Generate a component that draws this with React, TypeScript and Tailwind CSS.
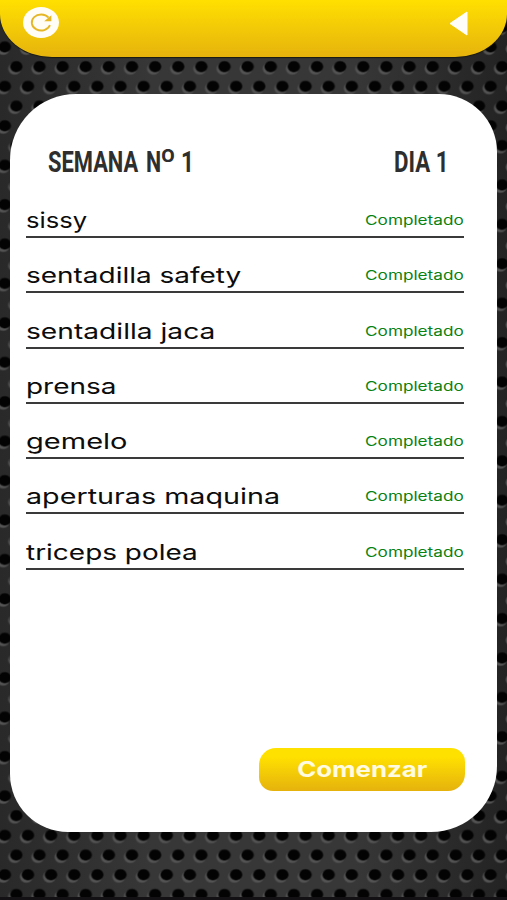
const exercises = [
  { name: "sissy", fit: "scale-x-[1.19]" },
  { name: "sentadilla safety", fit: "scale-x-[1.3]" },
  { name: "sentadilla jaca", fit: "scale-x-[1.31]" },
  { name: "prensa", fit: "scale-x-[1.3]" },
  { name: "gemelo", fit: "scale-x-[1.35]" },
  { name: "aperturas maquina", fit: "scale-x-[1.335]" },
  { name: "triceps polea", fit: "scale-x-[1.3]" },
];

// Perforated metal plate behind the whole screen
const MetalBackground = () => (
  <svg className="absolute inset-0 w-full h-full" aria-hidden="true">
    <defs>
      <linearGradient id="plate" x1="0" x2="1" y1="0" y2="0">
        <stop offset="0" stopColor="#292929" />
        <stop offset="0.3" stopColor="#373737" />
        <stop offset="0.7" stopColor="#373737" />
        <stop offset="1" stopColor="#232323" />
      </linearGradient>
      <radialGradient id="rim">
        <stop offset="0.75" stopColor="#545454" />
        <stop offset="1" stopColor="#545454" stopOpacity="0" />
      </radialGradient>
      <radialGradient id="hole">
        <stop offset="0.75" stopColor="#030303" />
        <stop offset="1" stopColor="#030303" stopOpacity="0" />
      </radialGradient>
      <pattern id="holes" width="23.13" height="39.42" patternUnits="userSpaceOnUse" patternTransform="translate(4.8 57)">
        <ellipse cx="9.9" cy="11.6" rx="7.2" ry="6.8" fill="url(#rim)" />
        <ellipse cx="11.5" cy="9.6" rx="7" ry="6.3" fill="url(#hole)" />
        <ellipse cx="-1.6" cy="31.3" rx="7.2" ry="6.8" fill="url(#rim)" />
        <ellipse cx="21.53" cy="31.3" rx="7.2" ry="6.8" fill="url(#rim)" />
        <ellipse cx="0" cy="29.3" rx="7" ry="6.3" fill="url(#hole)" />
        <ellipse cx="23.13" cy="29.3" rx="7" ry="6.3" fill="url(#hole)" />
      </pattern>
    </defs>
    <rect width="100%" height="100%" fill="url(#plate)" />
    <rect width="100%" height="100%" fill="url(#holes)" />
    <rect y="897" width="100%" height="3" fill="#141114" />
  </svg>
);

const Header = () => (
  <header className="relative flex h-[56.5px] items-start justify-between rounded-b-[52px_43px] bg-linear-to-b from-[#ffe000] to-[#e6b30c] pl-[23px] pr-[39px] shadow-[0_1px_1px_#1a1a10]">
    <button className="mt-[7px] h-[31px] w-9" aria-label="Recargar">
      <svg viewBox="0 0 36 31" className="h-full w-full">
        <ellipse cx="18" cy="15.5" rx="18" ry="15.5" fill="#fffdf5" />
        <path d="M27 18.2 A9.4 8 0 1 1 25.6 10.6" fill="none" stroke="#e5b727" strokeWidth="1.8" />
        <path d="M28.4 8.2 V14.3 H21.2 Z" fill="#e5b727" />
      </svg>
    </button>
    <button className="mt-[10.5px] h-[25px] w-[19px]" aria-label="Volver">
      <svg viewBox="0 0 19 25" className="h-full w-full">
        <path d="M1 12.5 L18 1 V24 Z" fill="#fffdf8" stroke="#fffdf8" strokeLinejoin="round" />
      </svg>
    </button>
  </header>
);

const App = () => {
  return (
    <div className="relative flex h-[900px] w-[507px] flex-col overflow-hidden font-[Inter,sans-serif] text-[#0c0c0c]">
      <MetalBackground />
      <Header />

      <main className="relative mx-[10px] mt-[37.5px] flex h-[738px] flex-col rounded-[66px_58px] bg-white pl-4 pr-[33px]">
        <div className="flex h-[87px] items-end justify-between pl-[22px] pr-4 font-[Roboto,sans-serif] text-[29px] leading-[38px] font-bold text-[#2e2e2e]">
          <h1 className="flex w-[146px] whitespace-nowrap">
            <span className="w-[98px] shrink-0 origin-left scale-x-[0.755]">SEMANA</span>
            <span className="w-[14px] shrink-0 origin-left scale-x-[0.74]">N</span>
            <span className="w-[21px] shrink-0 origin-left -translate-y-px scale-x-[1.05] font-[Inter,sans-serif] text-[33px] font-medium">º</span>
            <span className="w-[14px] shrink-0 origin-left scale-x-[0.78]">1</span>
          </h1>
          <h2 className="w-[54px] origin-left scale-x-[0.77] whitespace-nowrap">DIA 1</h2>
        </div>

        <ul>
          {exercises.map((exercise) => (
            <li
              key={exercise.name}
              className="flex h-[55.25px] items-end justify-between border-b-2 border-[#3a3a3a] pb-px whitespace-nowrap first:h-[57px]"
            >
              <span className={`origin-left text-[21.5px] leading-[30px] font-normal ${exercise.fit}`}>
                {exercise.name}
              </span>
              <span className="origin-right scale-x-[1.32] text-[13px] leading-[30px] font-normal text-[#0a8212]">
                Completado
              </span>
            </li>
          ))}
        </ul>

        <button className="-mr-px mt-auto mb-[41px] flex h-[43px] w-[206px] items-center justify-center self-end rounded-[17px_14px] bg-linear-to-b from-[#ffe100] from-20% to-[#e5b20c] text-[21.5px] font-bold text-[#fffbe0]">
          <span className="scale-x-[1.2]">Comenzar</span>
        </button>
      </main>
    </div>
  );
};

export default App;
